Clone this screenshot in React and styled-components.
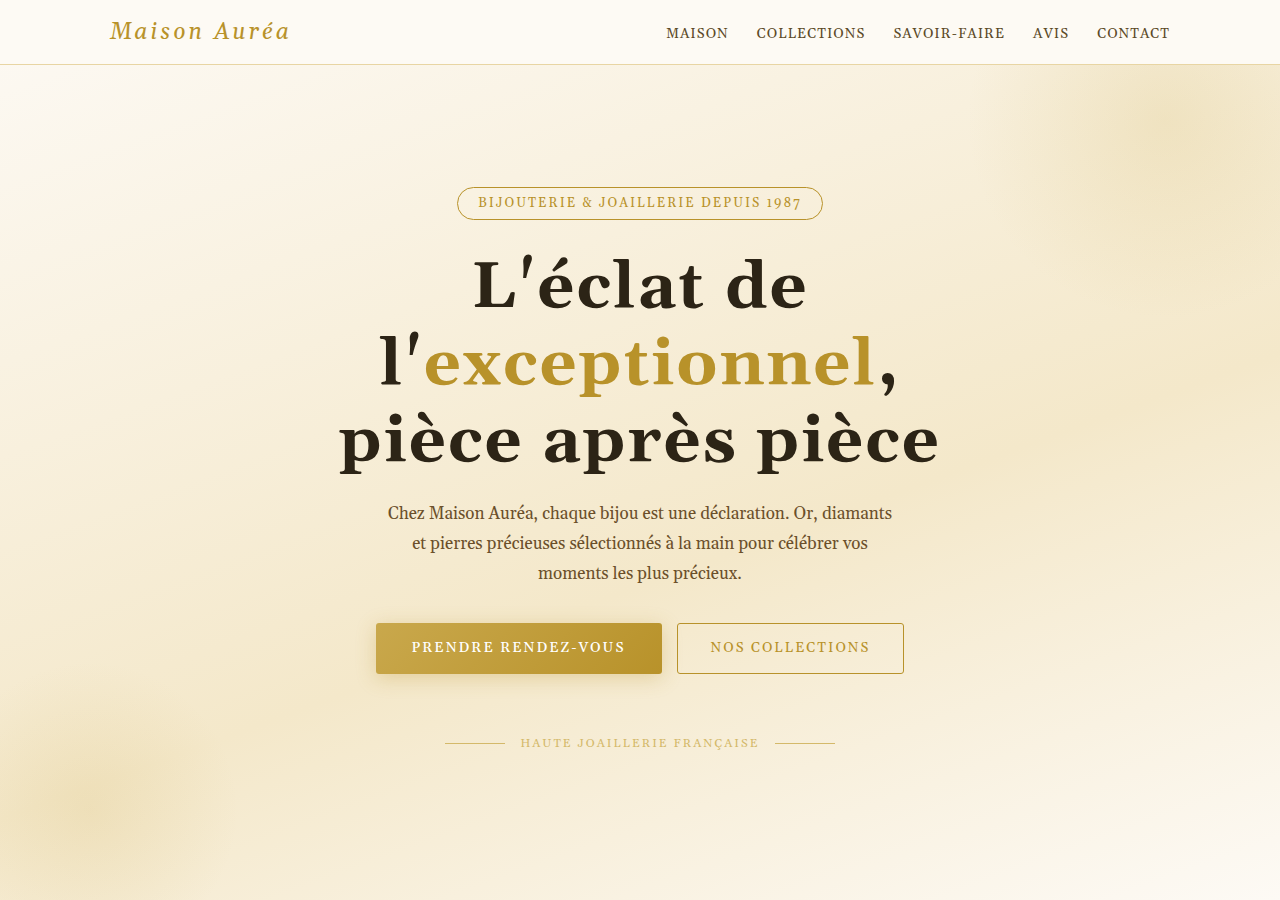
import * as React from 'react';
import styled, { createGlobalStyle } from 'styled-components'


const GlobalStyle = createGlobalStyle`
    * {
        box-sizing: border-box;
        margin: 0;
        padding: 0;
    }
    body {
        font-family: Georgia, Gelasio, "Liberation Serif", serif;
        background-color: #fdfaf4;
        color: #2c2416;
    }
    a {
        text-decoration: none;
    }
`
const Page = styled.div`
    min-height: 100vh;
    display: flex;
    flex-direction: column;
    background: linear-gradient(160deg, #fdfaf5 0%, #f4e8ca 60%, #fdfaf5 100%);
`
const Header = styled.header`
    background-color: #fdfaf4;
    border-bottom: 1px solid #e8d5a3;
`
const HeaderInner = styled.div`
    max-width: 1100px;
    margin: 0 auto;
    padding: 14px 20px 12px;
    display: flex;
    flex-wrap: wrap;
    justify-content: space-between;
    align-items: center;
`
const Logo = styled.a`
    color: #b8922a;
    font-size: 23px;
    font-style: italic;
    line-height: 38px;
    letter-spacing: 3px;
`
const Menu = styled.ul`
    display: flex;
    flex-wrap: wrap;
    gap: 28px;
    list-style: none;
`
const MenuLink = styled.a`
    color: #5c4a28;
    font-size: 14px;
    letter-spacing: 1px;
    text-transform: uppercase;
`
const Hero = styled.section`
    position: relative;
    overflow: hidden;
    flex: 1;
    display: flex;
    justify-content: center;
    align-items: center;
    padding: 34px 20px 60px;
    text-align: center;
`
const Glow = styled.div`
    position: absolute;
    width: ${props => props.$size}px;
    height: ${props => props.$size}px;
    border-radius: 50%;
    background: radial-gradient(circle, ${props => props.$color} 0%, transparent 70%);
    pointer-events: none;
`
const TopGlow = styled(Glow)`
    top: -145px;
    right: -85px;
`
const BottomGlow = styled(Glow)`
    bottom: -60px;
    left: -60px;
`
const HeroContent = styled.div`
    position: relative;
    max-width: 680px;
    display: flex;
    flex-direction: column;
    align-items: center;
`
const Badge = styled.span`
    padding: 6px 20px;
    border: 1px solid #b8922a;
    border-radius: 20px;
    color: #b8922a;
    font-size: 13px;
    line-height: 19px;
    letter-spacing: 2px;
    text-transform: uppercase;
`
const Title = styled.h1`
    margin-top: 30px;
    font-size: 65px;
    line-height: 77px;
    letter-spacing: 2px;
`
const Highlight = styled.span`
    color: #b8922a;
`
const Description = styled.p`
    max-width: 520px;
    margin-top: 18px;
    color: #6b4f2a;
    font-size: 17px;
    line-height: 30px;
`
const Actions = styled.div`
    display: flex;
    flex-wrap: wrap;
    justify-content: center;
    gap: 15px;
    margin-top: 34px;
`
const ActionLink = styled.a`
    padding: 15px 33px;
    border: 1px solid #b8922a;
    border-radius: 3px;
    color: #b8922a;
    font-size: 14px;
    line-height: 19px;
    letter-spacing: 2px;
    text-transform: uppercase;
`
const PrimaryLink = styled(ActionLink)`
    padding: 16px 36px;
    border: none;
    color: white;
    font-weight: 500;
    background: linear-gradient(135deg, #c9a84c, #b8922a);
    box-shadow: 0 4px 20px rgba(184, 146, 42, 0.3);
`
const Signature = styled.div`
    display: flex;
    align-items: center;
    gap: 16px;
    margin-top: 60px;
    color: #d4b96a;
    font-size: 12px;
    line-height: 19px;
    letter-spacing: 2px;
    text-transform: uppercase;

    &::before,
    &::after {
        content: '';
        width: 60px;
        height: 1px;
        background-color: #d4b96a;
    }
`

const links = [
     { title: 'Maison', href: '#maison' },
     { title: 'Collections', href: '#collections' },
     { title: 'Savoir-faire', href: '#savoir-faire' },
     { title: 'Avis', href: '#avis' },
     { title: 'Contact', href: '#contact' },
]


const App = () => {

     return (
          <Page>
               <GlobalStyle />
               <Header>
                    <HeaderInner>
                         <Logo href="#maison">Maison Auréa</Logo>
                         <nav>
                              <Menu>
                                   {links.map(link => (
                                        <li key={link.href}>
                                             <MenuLink href={link.href}>{link.title}</MenuLink>
                                        </li>
                                   ))}
                              </Menu>
                         </nav>
                    </HeaderInner>
               </Header>
               <Hero id="maison">
                    <TopGlow $size={400} $color="rgba(212, 185, 106, 0.22)" />
                    <BottomGlow $size={300} $color="rgba(201, 168, 76, 0.15)" />
                    <HeroContent>
                         <Badge>Bijouterie &amp; Joaillerie depuis 1987</Badge>
                         <Title>
                              L'éclat de l'<Highlight>exceptionnel</Highlight>, pièce après pièce
                         </Title>
                         <Description>
                              Chez Maison Auréa, chaque bijou est une déclaration. Or, diamants et pierres précieuses sélectionnés à la main pour célébrer vos moments les plus précieux.
                         </Description>
                         <Actions>
                              <PrimaryLink href="#contact">Prendre rendez-vous</PrimaryLink>
                              <ActionLink href="#collections">Nos collections</ActionLink>
                         </Actions>
                         <Signature>Haute Joaillerie Française</Signature>
                    </HeroContent>
               </Hero>
          </Page>
     )

}

export default App
